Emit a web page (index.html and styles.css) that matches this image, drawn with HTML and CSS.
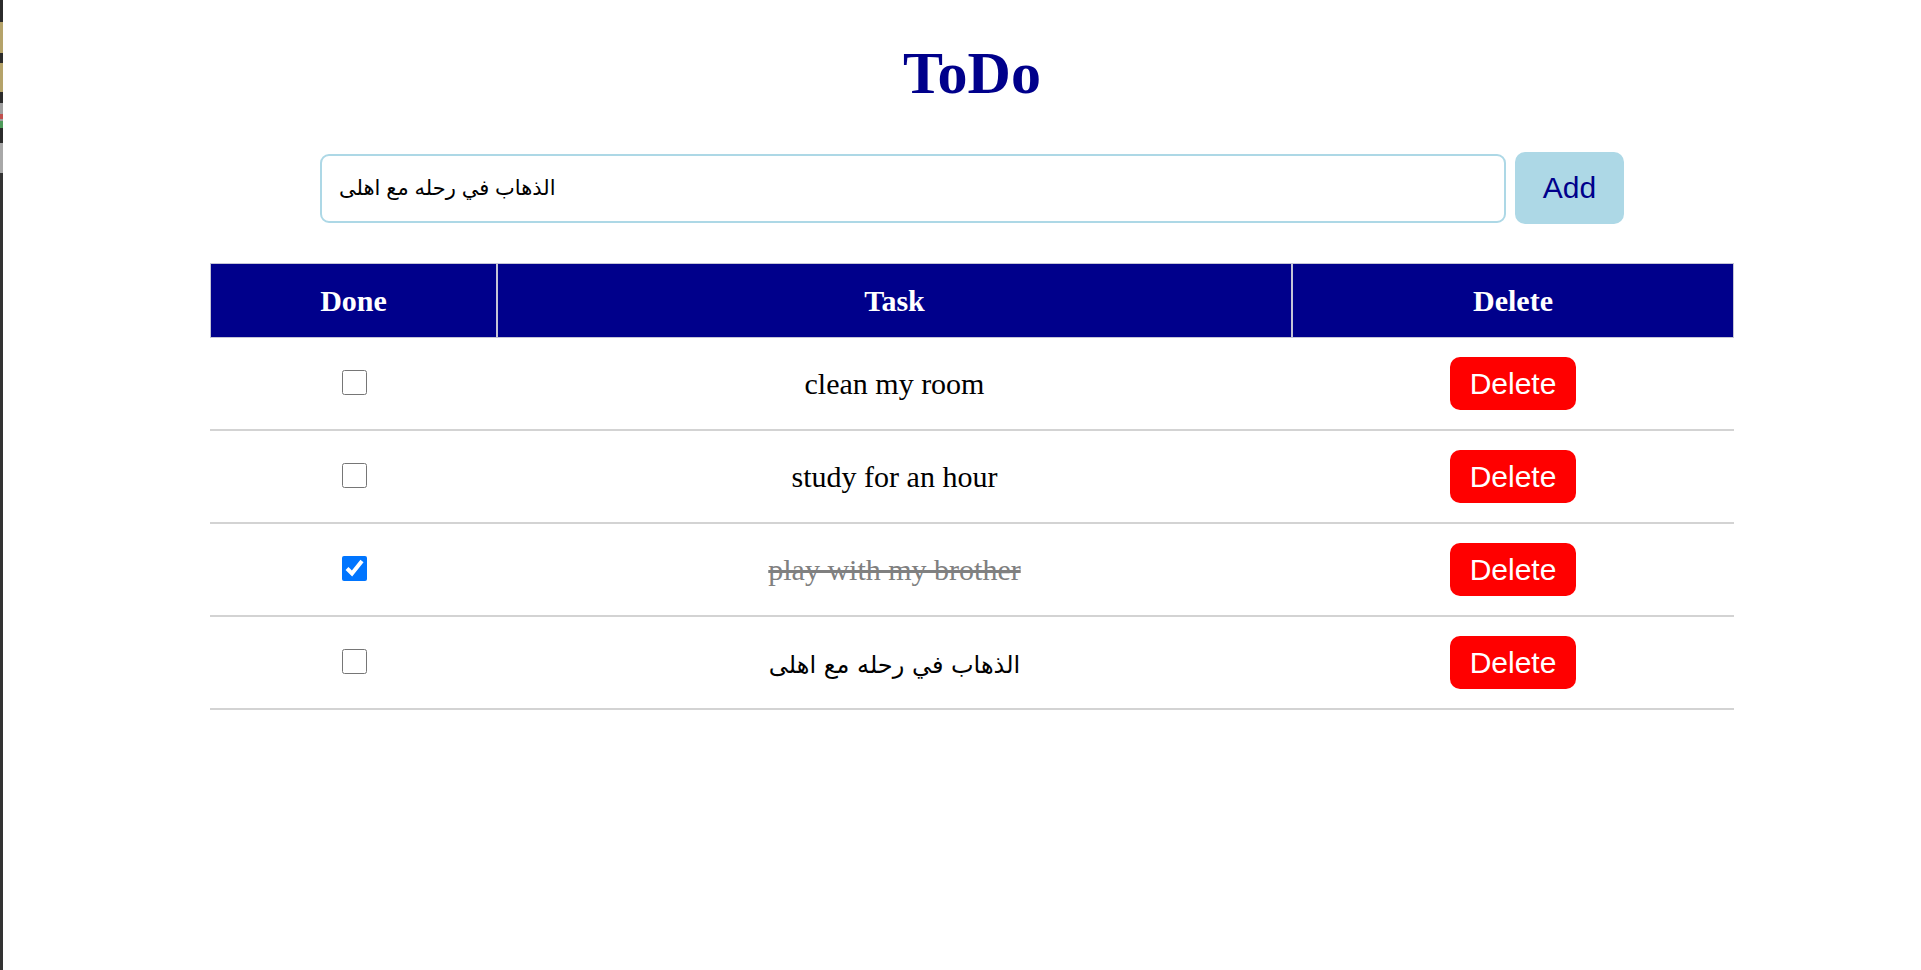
FILE: index.html
```html
<!DOCTYPE html>
<html lang="en">
<head>
<meta charset="utf-8">
<title>ToDo</title>
<link rel="stylesheet" href="styles.css">
</head>
<body>
<div class="screen">
  <div class="edge"></div>
  <main class="app">
    <h1 class="title">ToDo</h1>
    <div class="add-row">
      <input class="task-input" type="text" lang="ar" value="الذهاب في رحله مع اهلى">
      <button class="add-btn" type="button">Add</button>
    </div>
    <table class="todo-table">
      <thead>
        <tr>
          <th class="col-done">Done</th>
          <th class="col-task">Task</th>
          <th class="col-del">Delete</th>
        </tr>
      </thead>
      <tbody>
        <tr>
          <td class="check-cell"><input class="check" type="checkbox"></td>
          <td class="task">clean my room</td>
          <td><button class="del-btn" type="button">Delete</button></td>
        </tr>
        <tr>
          <td class="check-cell"><input class="check" type="checkbox"></td>
          <td class="task">study for an hour</td>
          <td><button class="del-btn" type="button">Delete</button></td>
        </tr>
        <tr>
          <td class="check-cell"><input class="check" type="checkbox" checked></td>
          <td class="task done">play with my brother</td>
          <td><button class="del-btn" type="button">Delete</button></td>
        </tr>
        <tr>
          <td class="check-cell"><input class="check" type="checkbox"></td>
          <td class="task"><span class="arabic" lang="ar">الذهاب في رحله مع اهلى</span></td>
          <td><button class="del-btn" type="button">Delete</button></td>
        </tr>
      </tbody>
    </table>
  </main>
</div>
</body>
</html>
```

FILE: styles.css
```css
html, body {
  margin: 0;
  padding: 0;
  background: #ffffff;
}

.screen {
  display: flex;
  min-height: 970px;
}

.edge {
  flex: none;
  width: 3px;
  background: linear-gradient(to bottom,
    #2b2b2b 0 22px,
    #b5a36a 22px 53px,
    #2b2b2b 53px 63px,
    #b5a36a 63px 92px,
    #2b2b2b 92px 103px,
    #a0a0a0 103px 114px,
    #c0504d 114px 119px,
    #a0a0a0 119px 121px,
    #4e9a5a 121px 128px,
    #2b2b2b 128px 143px,
    #a8a8a8 143px 173px,
    #333333 173px);
}

.app {
  flex: 1;
  padding-left: 20px;
  display: flex;
  flex-direction: column;
  align-items: center;
  font-family: "Liberation Serif", "DejaVu Sans", serif;
}

.title {
  margin: 39px 0 0;
  font-size: 60px;
  line-height: 69px;
  font-weight: bold;
  color: #00008b;
}

.add-row {
  margin-top: 44px;
  display: flex;
  align-items: center;
  gap: 9px;
}

.task-input {
  box-sizing: border-box;
  width: 1186px;
  height: 69px;
  margin: 0;
  padding: 0 17px;
  border: 2px solid #add8e6;
  border-radius: 9px;
  font-family: "Liberation Sans", "DejaVu Sans", sans-serif;
  font-size: 21px;
  line-height: 29px;
  color: #000000;
  background: #ffffff;
  outline: none;
}

.add-btn {
  box-sizing: border-box;
  width: 109px;
  height: 72px;
  margin: 0;
  padding: 0;
  border: none;
  border-radius: 10px;
  background: #add8e6;
  color: #00008b;
  font-family: "Liberation Sans", sans-serif;
  font-size: 30px;
}

.todo-table {
  margin-top: 39px;
  width: 1524px;
  table-layout: fixed;
  border-collapse: separate;
  border-spacing: 0;
}

.todo-table th {
  box-sizing: border-box;
  height: 75px;
  padding: 0;
  background: #00008b;
  color: #ffffff;
  font-size: 30px;
  font-weight: bold;
  border: 1px solid #c4c4d6;
  text-align: center;
  vertical-align: middle;
}

.col-done { width: 287px; }
.col-task { width: 795px; }
.col-del { width: 442px; }

.todo-table td {
  box-sizing: border-box;
  height: 93px;
  padding: 0;
  border-bottom: 2px solid #d3d3d3;
  text-align: center;
  vertical-align: middle;
  font-size: 30px;
  color: #000000;
}

.todo-table td.check-cell {
  padding: 0 0 2px 2px;
}

.task {
  font-family: "Liberation Serif", "DejaVu Sans", serif;
}

.task.done {
  color: #808080;
  text-decoration: line-through;
}

.arabic {
  font-family: "DejaVu Sans", sans-serif;
  font-size: 24px;
}

.check {
  display: block;
  width: 25px;
  height: 25px;
  margin: 0 auto;
}

.del-btn {
  margin: 0;
  padding: 9px 19.5px;
  border: none;
  border-radius: 10px;
  background: #ff0000;
  color: #ffffff;
  font-family: "Liberation Sans", sans-serif;
  font-size: 30px;
  line-height: 35px;
}
```
